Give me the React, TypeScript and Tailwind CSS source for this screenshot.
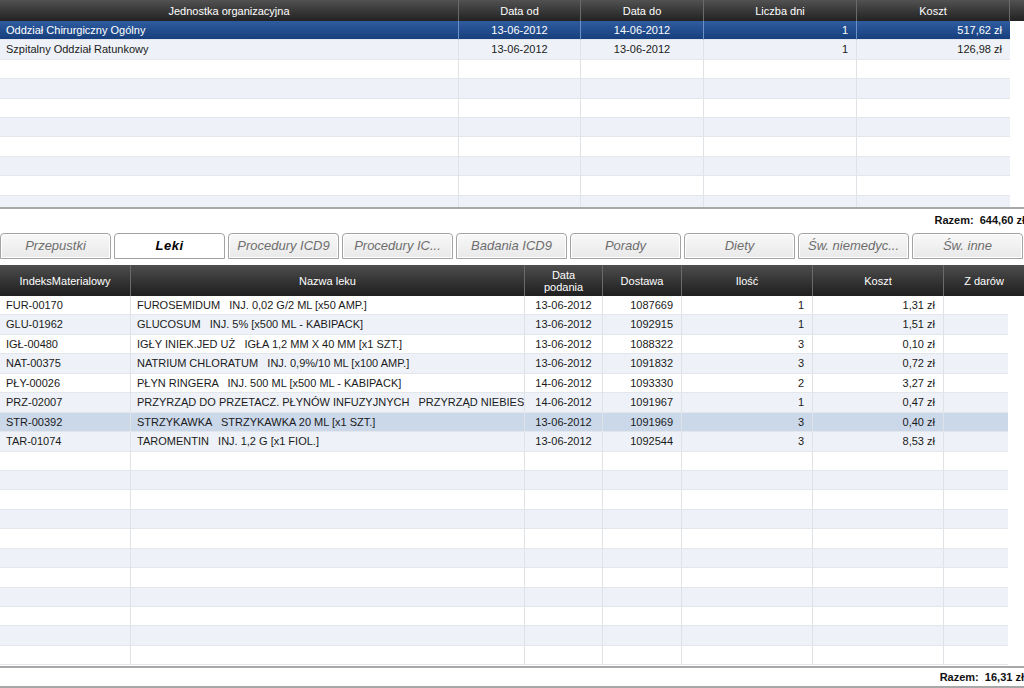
import React from 'react';

const FONT = { fontFamily: '"Liberation Sans", Arial, sans-serif' };

type Col = { w: string; align: 'left' | 'center' | 'right' };

const topCols: Col[] = [
  { w: 'w-[459px]', align: 'left' },
  { w: 'w-[122px]', align: 'center' },
  { w: 'w-[123px]', align: 'center' },
  { w: 'w-[153px]', align: 'right' },
  { w: 'w-[153px]', align: 'right' },
];

const topRows = [
  ['Oddział Chirurgiczny Ogólny', '13-06-2012', '14-06-2012', '1', '517,62 zł'],
  ['Szpitalny Oddział Ratunkowy', '13-06-2012', '13-06-2012', '1', '126,98 zł'],
];

const botCols: Col[] = [
  { w: 'w-[131px]', align: 'left' },
  { w: 'w-[394px]', align: 'left' },
  { w: 'w-[78px]', align: 'center' },
  { w: 'w-[79px]', align: 'right' },
  { w: 'w-[131px]', align: 'right' },
  { w: 'w-[131px]', align: 'right' },
  { w: 'w-[64px]', align: 'left' },
];

const botRows = [
  ['FUR-00170', 'FUROSEMIDUM   INJ. 0,02 G/2 ML [x50 AMP.]', '13-06-2012', '1087669', '1', '1,31 zł', ''],
  ['GLU-01962', 'GLUCOSUM   INJ. 5% [x500 ML - KABIPACK]', '13-06-2012', '1092915', '1', '1,51 zł', ''],
  ['IGŁ-00480', 'IGŁY INIEK.JED UŻ   IGŁA 1,2 MM X 40 MM [x1 SZT.]', '13-06-2012', '1088322', '3', '0,10 zł', ''],
  ['NAT-00375', 'NATRIUM CHLORATUM   INJ. 0,9%/10 ML [x100 AMP.]', '13-06-2012', '1091832', '3', '0,72 zł', ''],
  ['PŁY-00026', 'PŁYN RINGERA   INJ. 500 ML [x500 ML - KABIPACK]', '14-06-2012', '1093330', '2', '3,27 zł', ''],
  ['PRZ-02007', 'PRZYRZĄD DO PRZETACZ. PŁYNÓW INFUZYJNYCH   PRZYRZĄD NIEBIESKI', '14-06-2012', '1091967', '1', '0,47 zł', ''],
  ['STR-00392', 'STRZYKAWKA   STRZYKAWKA 20 ML [x1 SZT.]', '13-06-2012', '1091969', '3', '0,40 zł', ''],
  ['TAR-01074', 'TAROMENTIN   INJ. 1,2 G [x1 FIOL.]', '13-06-2012', '1092544', '3', '8,53 zł', ''],
];

const tabs = [
  'Przepustki',
  'Leki',
  'Procedury ICD9',
  'Procedury IC...',
  'Badania ICD9',
  'Porady',
  'Diety',
  'Św. niemedyc...',
  'Św. inne',
];

const alignCls = (a: Col['align']) =>
  a === 'left' ? 'justify-start pl-[6px]' : a === 'center' ? 'justify-center' : 'justify-end pr-[8px]';

function HeaderCell({ w, children, last }: { w: string; children: React.ReactNode; last?: boolean }) {
  return (
    <div
      className={`${w} shrink-0 h-full flex items-center justify-center text-center text-white leading-[12px] ${
        last ? '' : 'border-r border-[#6a6a6a]'
      }`}
    >
      {children}
    </div>
  );
}

function Row({
  cols,
  cells,
  kind,
  height,
}: {
  cols: Col[];
  cells: string[];
  kind: 'plain' | 'stripe' | 'selected' | 'highlight';
  height: string;
}) {
  const bg =
    kind === 'selected'
      ? 'bg-linear-to-b from-[#2e5c9f] to-[#173f7d] text-white'
      : kind === 'highlight'
      ? 'bg-[#cbd8ea] text-[#1a1a1a]'
      : kind === 'stripe'
      ? 'bg-[#eef2f8] text-[#1a1a1a]'
      : 'bg-white text-[#1a1a1a]';
  const line = kind === 'selected' ? 'border-[#6c8fc4]' : 'border-[#dfe2e6]';
  return (
    <div className={`flex ${height} shrink-0`}>
      {cols.map((c, i) => (
        <div
          key={i}
          className={`${c.w} shrink-0 h-full flex items-center overflow-hidden whitespace-pre border-b border-b-[#e3e6ea] ${
            i < cols.length - 1 ? `border-r ${line}` : ''
          } ${bg} ${alignCls(c.align)}`}
        >
          {cells[i] ?? ''}
        </div>
      ))}
    </div>
  );
}

export default function App() {
  const topEmpty = 8;
  const botEmpty = 11;
  return (
    <div className="w-[1024px] h-[688px] overflow-hidden bg-white text-[11px] flex flex-col" style={FONT}>
      {/* top table */}
      <div className="flex h-[21px] shrink-0 bg-linear-to-b from-[#525252] to-[#222222]">
        <HeaderCell w="w-[459px]">Jednostka organizacyjna</HeaderCell>
        <HeaderCell w="w-[122px]">Data od</HeaderCell>
        <HeaderCell w="w-[123px]">Data do</HeaderCell>
        <HeaderCell w="w-[153px]">Liczba dni</HeaderCell>
        <HeaderCell w="w-[153px]">Koszt</HeaderCell>
        <HeaderCell w="w-[14px]" last>
          {''}
        </HeaderCell>
      </div>
      <div className="h-[186px] shrink-0 overflow-hidden flex flex-col">
        {topRows.map((r, i) => (
          <Row key={i} cols={topCols} cells={r} kind={i === 0 ? 'selected' : 'stripe'} height="h-[19.4px]" />
        ))}
        {Array.from({ length: topEmpty }).map((_, i) => (
          <Row key={`e${i}`} cols={topCols} cells={[]} kind={i % 2 === 1 ? 'stripe' : 'plain'} height="h-[19.4px]" />
        ))}
      </div>
      <div className="h-[2px] shrink-0 bg-[#a8a8a8]" />
      <div className="h-[22px] shrink-0 flex items-center justify-end font-bold text-[#111] -mr-[1px] whitespace-pre">
        Razem:  644,60 zł
      </div>

      {/* tabs */}
      <div className="h-[2px] shrink-0" />
      <div className="h-[26px] shrink-0 flex gap-[3px] items-end">
        {tabs.map((t) => {
          const active = t === 'Leki';
          return (
            <div
              key={t}
              className={`w-[111px] shrink-0 h-full flex items-center justify-center rounded-t-[4px] border border-[#a3a3a3] text-[13px] italic ${
                active
                  ? 'bg-white font-bold text-black tracking-[0.5px]'
                  : 'bg-linear-to-b from-[#f8f8f8] to-[#e9e9e9] text-[#6e6e6e] shadow-[inset_0_0_0_1px_#ffffff]'
              }`}
            >
              {t}
            </div>
          );
        })}
      </div>
      <div className="h-[6px] shrink-0" />

      {/* bottom table */}
      <div className="flex h-[31px] shrink-0 bg-linear-to-b from-[#4e4e4e] to-[#1f1f1f]">
        <HeaderCell w="w-[131px]">IndeksMaterialowy</HeaderCell>
        <HeaderCell w="w-[394px]">Nazwa leku</HeaderCell>
        <HeaderCell w="w-[78px]">
          Data
          <br />
          podania
        </HeaderCell>
        <HeaderCell w="w-[79px]">Dostawa</HeaderCell>
        <HeaderCell w="w-[131px]">Ilość</HeaderCell>
        <HeaderCell w="w-[131px]">Koszt</HeaderCell>
        <HeaderCell w="w-[80px]" last>
          Z darów
        </HeaderCell>
      </div>
      <div className="h-[370px] shrink-0 overflow-hidden flex flex-col">
        {botRows.map((r, i) => (
          <Row
            key={i}
            cols={botCols}
            cells={r}
            kind={r[0] === 'STR-00392' ? 'highlight' : i % 2 === 1 ? 'stripe' : 'plain'}
            height="h-[19.45px]"
          />
        ))}
        {Array.from({ length: botEmpty }).map((_, i) => (
          <Row
            key={`e${i}`}
            cols={botCols}
            cells={[]}
            kind={(botRows.length + i) % 2 === 1 ? 'stripe' : 'plain'}
            height="h-[19.45px]"
          />
        ))}
      </div>
      <div className="h-[2px] shrink-0 bg-[#a8a8a8]" />
      <div className="h-[18px] shrink-0 flex items-center justify-end font-bold text-[#111] whitespace-pre">
        Razem:  16,31 zł
      </div>
      <div className="h-[2px] shrink-0 bg-[#a8a8a8]" />
    </div>
  );
}
